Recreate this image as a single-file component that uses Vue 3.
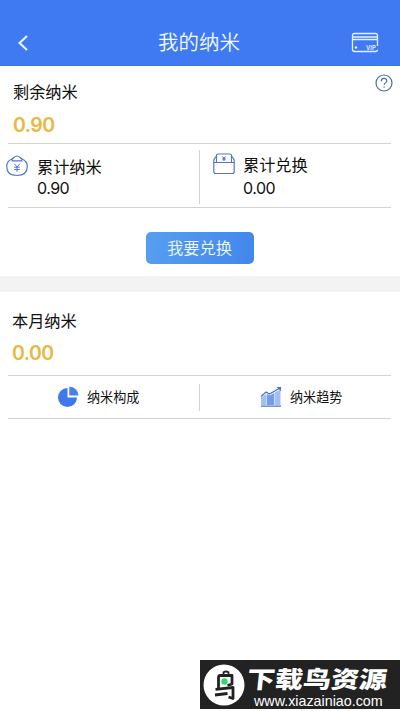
<script setup>
const totals = [
  { key: 'earned', label: '累计纳米', value: '0.90' },
  { key: 'redeemed', label: '累计兑换', value: '0.00' },
]
</script>

<template>
  <main class="page">
    <header class="bar">
      <svg class="back" viewBox="0 0 12 18"><path d="M10 2 2.500 9 10 16" /></svg>
      <h1>我的纳米</h1>
      <svg class="vip" viewBox="0 0 28 22">
        <path d="M26.500 14V3.500Q26.500 1.500 24.500 1.500H3.500Q1.500 1.500 1.500 3.500V17.500Q1.500 19.500 3.500 19.500H24.500Q26.500 19.500 26.500 17.800M1.500 5H26.500M1.500 7.500H26.500" />
        <circle cx="5" cy="15.500" r="1.200" />
        <text x="15" y="17.800">VIP</text>
      </svg>
    </header>

    <section class="balance">
      <div class="heading">
        <h2>剩余纳米</h2>
        <svg class="help" viewBox="0 0 18 18">
          <circle cx="9" cy="9" r="8" />
          <path d="M6.300 7.200C6.300 3.500 11.800 3.600 11.800 6.900C11.800 8.900 9.100 8.900 9.100 11" />
          <path d="M9.100 12.500V13.800" />
        </svg>
      </div>
      <p class="amount">0.90</p>
      <div class="totals">
        <div v-for="t in totals" :key="t.key" class="total" :class="t.key">
          <svg v-if="t.key === 'earned'" class="icon" viewBox="0 0 22 22">
            <path d="M6.200 4C2.800 5.200 .700 8 .700 11.500C.700 17.500 4.500 20.500 11 20.500S21.300 17.500 21.300 11.500C21.300 8 19.200 5.200 15.800 4M6.200 3.500V5.800H15.800V3.500C14 3.500 14 1 11 1S8 3.500 6.200 3.500Z" />
            <path class="yen" d="m8.300 8.800 2.700 3.200 2.700-3.200M11 12v4.800M8.200 12.200h5.600M8.200 14.500h5.600" />
          </svg>
          <svg v-else class="icon" viewBox="0 0 22 22">
            <path d="M3.500 9V2.700Q3.500 1 5 1H17Q18.500 1 18.500 2.700V9M3.500 4H2.500L.800 7V9.500M18.500 4H19.500L21.200 7V9.500M.800 9.500H21.200V18.500Q21.200 20.500 19.200 20.500H2.800Q.800 20.500 .800 18.500Z" />
            <path class="yen" d="m9.500 3.500 1.500 1.700 1.500-1.700M11 5v3M9.300 5.300h3.400M9.500 6.700h3" />
          </svg>
          <dl><dt>{{ t.label }}</dt><dd>{{ t.value }}</dd></dl>
        </div>
      </div>
      <button type="button">我要兑换</button>
    </section>

    <section class="month">
      <h2>本月纳米</h2>
      <p class="amount">0.00</p>
      <nav class="links">
        <a class="share">
          <svg class="icon" viewBox="0 0 22 22">
            <path d="M10.500 2A9.500 9.500 0 1 0 20 11.500H10.500Z" fill="#3f78ea" />
            <path d="M12.300 .700A9 9 0 0 1 21.500 9.500H12.300Z" fill="#4b80e9" />
          </svg>
          <span>纳米构成</span>
        </a>
        <a class="trend">
          <svg class="icon" viewBox="0 0 22 22">
            <path d="M1 11.500 6.500 7.800V19H1ZM14.500 6.800 20.500 3.500V19H14.500Z" fill="#a4bdf4" />
            <path d="M7 8 10 9.500 14 7V19H7Z" fill="#759be9" />
            <path d="M1 10.500 6 6 9.500 8 19 2.500M1 20.200H21" fill="none" stroke="#4871ca" stroke-width="1.300" />
            <path d="M16.500 .900H21V5.300Z" fill="#4871ca" />
          </svg>
          <span>纳米趋势</span>
        </a>
      </nav>
    </section>

    <footer class="mark">
      <svg class="bird" viewBox="0 0 42 42">
        <circle cx="21" cy="21" r="20.500" fill="#fff" />
        <g fill="none" stroke="#202321" stroke-width="2.800" stroke-linejoin="round">
          <path d="M20.500 11V8.200Q23 6.800 25.500 8.200V11" stroke-width="1.800" />
          <path d="M15.500 24V13.500Q15.500 11.500 17.500 11.500H29V20L24.500 21.500" />
          <path d="M12.500 25.300 30 23.500V34.500L25.500 33M12 31 24.500 29.500" />
        </g>
        <circle cx="21.500" cy="17.500" r="3.200" fill="#35d46b" />
      </svg>
      <div class="site"><strong>下载鸟资源</strong><span>www.xiazainiao.com</span></div>
    </footer>
  </main>
</template>

<style>
body { margin: 0; background: #fff; }
</style>

<style scoped>
* { box-sizing: border-box; }
.page { width: 400px; height: 711px; display: flex; flex-direction: column; overflow: hidden; background: #fff; color: #111; font-family: Inter, "Noto Sans CJK SC", sans-serif; }
h1, h2, p, dl, dd { margin: 0; font-weight: 400; }
svg { display: block; flex: none; }
.bar { height: 66px; flex: none; padding: 21px 21px 0 17px; display: flex; align-items: center; justify-content: space-between; background: #3f7af2; border-bottom: 1px solid #3b70df; color: #f2fbff; }
.bar h1 { font-size: 20.500px; line-height: 28px; font-weight: 350; margin-left: 18px; }
.back { width: 12px; height: 18px; fill: none; stroke: #ecfaff; stroke-width: 2; }
.vip { width: 28px; height: 22px; fill: none; stroke: #e0f4ff; stroke-width: 1.300; }
.vip circle { fill: #e0f4ff; stroke: none; }
.vip text { font: 600 6px Inter, sans-serif; fill: #e0f4ff; stroke: none; }
h2 { font-size: 16.200px; line-height: 24px; }
.balance { height: 210px; flex: none; display: flex; flex-direction: column; }
.heading { height: 46px; padding: 14px 7px 0 13px; display: flex; justify-content: space-between; }
.help { width: 18px; height: 18px; margin-top: -6px; fill: none; stroke: #4d68ad; stroke-width: 1.200; }
.amount { height: 26px; padding-left: 13px; font-size: 19.500px; line-height: 26px; font-weight: 600; color: #e8b840; letter-spacing: -.500px; }
.totals { height: 65px; margin: 5px 9px 0 8px; border-top: 1px solid #d2d2d4; border-bottom: 1px solid #d2d2d4; display: grid; grid-template-columns: 192px 1fr; }
.total { display: flex; }
.earned { margin: 6px 0 3px -2px; border-right: 1px solid #d2d2d4; }
.earned .icon { margin: 5px 9px 0 0; }
.redeemed .icon { margin: 9px 8px 0 13px; }
.total .icon { width: 22px; height: 22px; fill: none; stroke: #5277cc; stroke-width: 1.200; }
.total .yen { stroke-width: 1; }
.earned dl { padding-top: 5px; }
.redeemed dl { padding-top: 9px; }
dt { font-size: 16.200px; line-height: 24px; }
dd { font-size: 16px; line-height: 22px; letter-spacing: -.500px; }
.earned dt { height: 22px; }
.redeemed dt { height: 24px; }
button { align-self: center; width: 108px; height: 32px; margin: 24px 1px 0 0; padding: 0; border: 0; border-radius: 5px; background: linear-gradient(100deg, #569ff0, #4386ec); color: #f1faff; font: 350 16.300px/31px Inter, "Noto Sans CJK SC", sans-serif; }
.month { border-top: 16px solid #f3f3f4; padding-top: 17px; }
.month h2, .month .amount { padding-left: 12px; }
.month .amount { margin-top: 7px; }
.links { height: 44px; margin: 9px 9px 0 8px; border-top: 1px solid #d2d2d4; border-bottom: 1px solid #d2d2d4; display: grid; grid-template-columns: 192px 1fr; align-items: center; }
.links a { display: flex; align-items: center; height: 27px; font-size: 13.100px; line-height: 20px; }
.links .icon { width: 22px; height: 22px; margin-right: 8px; }
.share { padding-left: 49px; border-right: 1px solid #d2d2d4; }
.trend { padding-left: 60px; }
.mark { width: 200px; height: 49px; flex: none; margin: auto 0 2px auto; display: flex; align-items: center; padding-left: 3px; background: #222; color: #fff; }
.bird { width: 42px; height: 42px; }
.site { display: flex; flex-direction: column; padding: 7px 0 0 2px; }
.site strong { font-size: 28px; line-height: 27px; height: 27px; font-weight: 900; white-space: nowrap; transform: scaleY(.84) skewX(-5deg); }
.site span { padding-left: 7px; font: 14.300px/15px "Liberation Sans", sans-serif; }
</style>
